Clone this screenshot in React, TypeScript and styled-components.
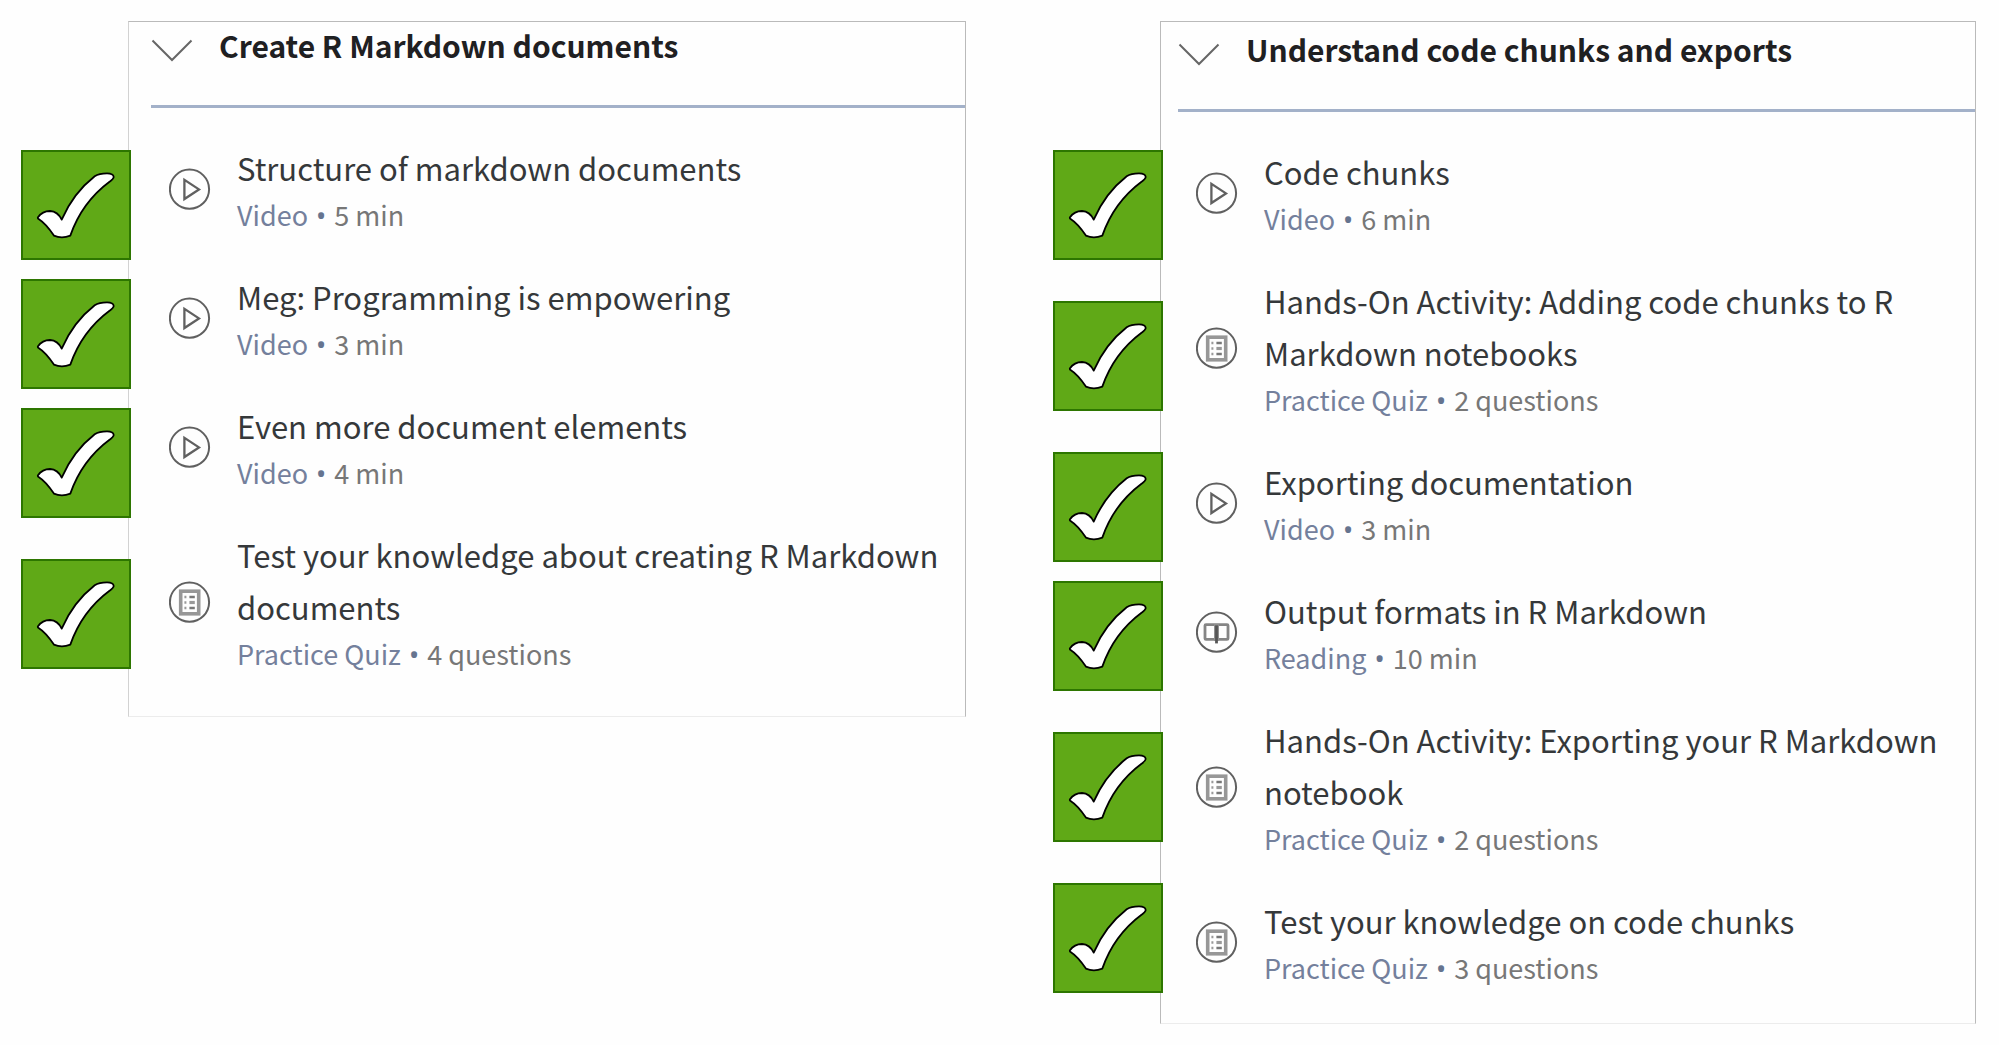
import React, { useState } from "react";
import styled, { createGlobalStyle } from "styled-components";

type Kind = "Video" | "Reading" | "Practice Quiz";

interface Lesson {
  title: string;
  kind: Kind;
  length: string;
  spaced?: boolean;
}

interface Section {
  heading: string;
  lessons: Lesson[];
  inset: number;
  top: number;
  bottom: number;
  edge: string;
}

const sections: Section[] = [
  {
    heading: "Create R Markdown documents",
    inset: 22,
    top: 0,
    bottom: 24,
    edge: "#d2d2d2",
    lessons: [
      { title: "Structure of markdown documents", kind: "Video", length: "5 min" },
      { title: "Meg: Programming is empowering", kind: "Video", length: "3 min" },
      { title: "Even more document elements", kind: "Video", length: "4 min" },
      {
        title: "Test your knowledge about creating R Markdown documents",
        kind: "Practice Quiz",
        length: "4 questions",
        spaced: true,
      },
    ],
  },
  {
    heading: "Understand code chunks and exports",
    inset: 17,
    top: 4,
    bottom: 17,
    edge: "#bababa",
    lessons: [
      { title: "Code chunks", kind: "Video", length: "6 min" },
      {
        title: "Hands-On Activity: Adding code chunks to R Markdown notebooks",
        kind: "Practice Quiz",
        length: "2 questions",
        spaced: true,
      },
      { title: "Exporting documentation", kind: "Video", length: "3 min", spaced: true },
      { title: "Output formats in R Markdown", kind: "Reading", length: "10 min" },
      {
        title: "Hands-On Activity: Exporting your R Markdown notebook",
        kind: "Practice Quiz",
        length: "2 questions",
        spaced: true,
      },
      {
        title: "Test your knowledge on code chunks",
        kind: "Practice Quiz",
        length: "3 questions",
        spaced: true,
      },
    ],
  },
];

const GlobalStyle = createGlobalStyle`
  *, *::before, *::after { box-sizing: border-box; }
  body {
    margin: 0;
    background: #fefefe;
    font-family: "Noto Sans CJK SC", "Noto Sans", sans-serif;
  }
`;

const Page = styled.main`
  display: grid;
  grid-template-columns: 945fr 923fr;
  align-items: start;
  gap: 87px;
  padding: 21px 23px 22px 21px;
`;

const Column = styled.section`
  display: flex;
  align-items: flex-start;
`;

const Stamps = styled.div`
  display: flex;
  flex-direction: column;
  flex: none;
  width: 110px;
  margin-right: -3px;
  padding-top: 129px;
  z-index: 1;
`;

const Stamp = styled.label<{ $gap: number }>`
  display: block;
  height: 110px;
  margin-top: ${(p) => p.$gap}px;
  background: #60a917;
  border: 2px solid #2d7600;
  cursor: pointer;

  &:focus-within {
    outline: 2px solid #9aaac4;
  }
`;

const HiddenBox = styled.input`
  position: absolute;
  opacity: 0;
  width: 1px;
  height: 1px;
  margin: 0;
`;

const Panel = styled.div<{ $inset: number; $top: number; $bottom: number; $edge: string }>`
  flex: 1;
  min-width: 0;
  padding: ${(p) => p.$top}px 0 ${(p) => p.$bottom}px ${(p) => p.$inset}px;
  border: 1px solid #bababa;
  border-left-color: ${(p) => p.$edge};
  border-bottom-color: #ececec;
`;

const Header = styled.header`
  display: flex;
  align-items: flex-start;
  gap: 26px;
  height: 86px;
  border-bottom: 3px solid #a3b1c9;
`;

const Toggle = styled.button`
  display: block;
  flex: none;
  width: 42px;
  height: 52px;
  padding: 0;
  border: 0;
  background: none;
  cursor: pointer;
`;

const Heading = styled.h2`
  margin: 0;
  font-size: 30px;
  line-height: 46px;
  font-weight: 700;
  color: #1f2022;
`;

const List = styled.ul`
  margin: 0;
  padding: 16px 0 0;
  list-style: none;
`;

const Row = styled.li`
  display: flex;
  align-items: center;
  gap: 26px;
  padding: 18px 16px 18px 18px;
`;

const KindIcon = styled.svg`
  flex: none;
  width: 42px;
  height: 42px;
`;

const Title = styled.a`
  display: block;
  font-size: 31px;
  line-height: 52px;
  color: #35383a;
  text-decoration: none;
`;

const Meta = styled.p`
  margin: 0;
  font-size: 27px;
  line-height: 41px;
  color: #777;
`;

const KindName = styled.span`
  color: #74809c;
`;

const Bullet = styled.span`
  margin: 0 2px;
  font-family: "Noto Sans", sans-serif;
  line-height: 1;
  color: #66748f;
`;

function Tick() {
  return (
    <svg width="106" height="106" viewBox="2 2 106 106" aria-hidden="true">
      <path
        d="M17 67.3C20 63 24 61 29 61C34 61.2 38 64 40.7 69.6C48 53 60 37 73.7 26.3C77 24 81 23.3 86 23.3C90 23.3 92.5 24 92.7 27C92.5 29 91 30 88.5 31.7C72 44 57.5 62 49.3 85.6C44 87.7 37.5 87.6 32.9 85.6C28.5 79 24 73 17.6 69Q16.4 68.4 17 67.3Z"
        fill="#fff"
        stroke="#000"
        strokeWidth="1.8"
        strokeLinejoin="round"
      />
    </svg>
  );
}

function LessonIcon({ kind }: { kind: Kind }) {
  return (
    <KindIcon viewBox="0 0 42 42" fill="none" aria-hidden="true">
      <circle cx="20.5" cy="21.2" r="19.6" stroke="#606060" strokeWidth="2" />
      {kind === "Video" && (
        <path d="M15.4 11.8V31L30 21.4Z" stroke="#606060" strokeWidth="2.3" />
      )}
      {kind === "Practice Quiz" && (
        <>
          <rect x="11.7" y="10.2" width="18" height="22.6" stroke="#979797" strokeWidth="3.6" />
          <path d="M15.4 16h2M15.4 21.5h2M15.4 27h2" stroke="#999" strokeWidth="2.4" />
          <path d="M20.4 16h5.4M20.4 27h5.4" stroke="#777" strokeWidth="2.4" />
          <path d="M20.4 21.5h5.4" stroke="#999" strokeWidth="3.2" />
        </>
      )}
      {kind === "Reading" && (
        <>
          <rect x="9" y="13.6" width="23" height="14.8" rx="1" stroke="#858585" strokeWidth="2.8" />
          <path d="M20.5 13v17" stroke="#909090" strokeWidth="5" />
          <path d="M20.5 14.4v18" stroke="#555" strokeWidth="2.8" />
        </>
      )}
    </KindIcon>
  );
}

function SectionColumn({ section }: { section: Section }) {
  const [done, setDone] = useState(section.lessons.map(() => true));
  const [open, setOpen] = useState(true);

  return (
    <Column>
      <Stamps>
        {section.lessons.map((lesson, i) => (
          <Stamp key={lesson.title} $gap={i === 0 ? 0 : lesson.spaced ? 41 : 19}>
            <HiddenBox
              type="checkbox"
              checked={done[i]}
              aria-label={lesson.title}
              onChange={() => setDone(done.map((d, n) => (n === i ? !d : d)))}
            />
            {done[i] && <Tick />}
          </Stamp>
        ))}
      </Stamps>
      <Panel
        $inset={section.inset}
        $top={section.top}
        $bottom={section.bottom}
        $edge={section.edge}
      >
        <Header>
          <Toggle aria-label={section.heading} aria-expanded={open} onClick={() => setOpen(!open)}>
            <svg width="42" height="52" viewBox="0 0 42 52" fill="none" aria-hidden="true">
              <path d="M1.5 18.5L21 38L40.5 18.5" stroke="#666" strokeWidth="2" />
            </svg>
          </Toggle>
          <Heading>{section.heading}</Heading>
        </Header>
        {open && (
          <List>
            {section.lessons.map((lesson) => (
              <Row key={lesson.title}>
                <LessonIcon kind={lesson.kind} />
                <div>
                  <Title href="#">{lesson.title}</Title>
                  <Meta>
                    <KindName>{lesson.kind}</KindName> <Bullet>•</Bullet> {lesson.length}
                  </Meta>
                </div>
              </Row>
            ))}
          </List>
        )}
      </Panel>
    </Column>
  );
}

export default function App() {
  return (
    <>
      <GlobalStyle />
      <Page>
        {sections.map((section) => (
          <SectionColumn key={section.heading} section={section} />
        ))}
      </Page>
    </>
  );
}
